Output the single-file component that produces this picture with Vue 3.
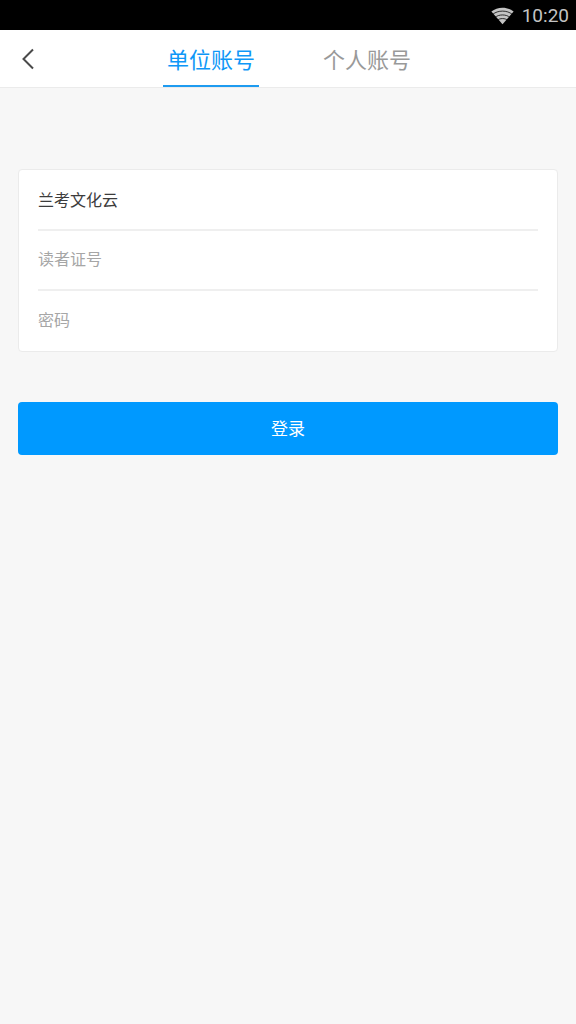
<script setup>
import { ref } from 'vue'

const tabs = ['单位账号', '个人账号']
const active = ref(0)
const unit = ref('兰考文化云')
const reader = ref('')
const password = ref('')
</script>

<template>
  <div class="screen">
    <div class="status">
      <svg class="wifi" viewBox="0 0 24 18" aria-hidden="true">
        <path class="fan" d="M12 17.6 0.4 4.4C3.6 1.7 7.6 0.3 12 0.3s8.4 1.4 11.6 4.1z" />
        <path class="gap" d="M1.8 7.3C4.6 5 8.1 3.9 12 3.9s7.4 1.1 10.2 3.4" />
        <path class="gap" d="M4 10.6C6.2 8.8 8.9 7.9 12 7.9s5.8 0.9 8 2.7" />
        <path class="gap" d="M6.4 13.5c1.6-1.2 3.4-1.8 5.6-1.8s4 0.6 5.6 1.8" />
      </svg>
      <span class="clock">10:20</span>
    </div>

    <header class="header">
      <button class="back" type="button" aria-label="返回">
        <svg viewBox="0 0 12 22" aria-hidden="true">
          <path d="M11 1.5 1.5 11 11 20.5" />
        </svg>
      </button>
      <nav class="tabs">
        <button
          v-for="(tab, i) in tabs"
          :key="tab"
          type="button"
          class="tab"
          :class="{ active: active === i }"
          @click="active = i"
        >{{ tab }}</button>
      </nav>
    </header>

    <form class="form" @submit.prevent>
      <div class="card">
        <div class="row">
          <input v-model="unit" type="text" aria-label="单位" />
        </div>
        <div class="row">
          <input v-model="reader" type="text" placeholder="读者证号" aria-label="读者证号" />
        </div>
        <div class="row">
          <input v-model="password" type="password" placeholder="密码" aria-label="密码" />
        </div>
      </div>
      <button class="submit" type="submit">登录</button>
    </form>
  </div>
</template>

<style>
body {
  margin: 0;
  background: #f7f7f7;
}
</style>

<style scoped>
.screen {
  min-height: 100vh;
  background: #f7f7f7;
  font-family: Roboto, "Noto Sans CJK SC", sans-serif;
}

.screen * {
  box-sizing: border-box;
}

button,
input {
  margin: 0;
  padding: 0;
  border: 0;
  background: none;
  font-family: inherit;
}

.status {
  display: flex;
  align-items: center;
  justify-content: flex-end;
  gap: 8px;
  height: 30px;
  padding: 2px 7px 0 0;
  background: #000;
}

.wifi {
  width: 23px;
  height: 18px;
}

.fan {
  fill: #c4c4c4;
}

.gap {
  fill: none;
  stroke: #000;
  stroke-width: 0.8;
}

.clock {
  color: #c4c4c4;
  font-size: 19px;
  line-height: 28px;
}

.header {
  display: grid;
  grid-template-columns: 56px 1fr 54px;
  height: 58px;
  border-bottom: 1px solid #ebebeb;
  background: #fff;
}

.back {
  display: flex;
  align-items: center;
  justify-content: center;
}

.back svg {
  width: 12px;
  height: 22px;
  fill: none;
  stroke: #4a4a4a;
  stroke-width: 2;
}

.tabs {
  display: flex;
  justify-content: center;
  gap: 60px;
}

.tab {
  padding: 6px 4px 0;
  border-bottom: 2px solid transparent;
  color: #999;
  font-size: 22px;
  line-height: 32px;
}

.tab.active {
  border-bottom-color: #1e9bf0;
  color: #0e97f7;
}

.form {
  padding: 81px 18px 0;
}

.card {
  padding: 1px 19px 0;
  border: 1px solid #ebebeb;
  border-radius: 4px;
  background: #fff;
}

.row {
  height: 60px;
  border-bottom: 2px solid #efefef;
}

.row:last-child {
  border-bottom: 0;
}

.row input {
  display: block;
  width: 100%;
  height: 100%;
  padding-bottom: 2px;
  color: #3c3c3c;
  font-size: 16px;
  outline: none;
}

.row input::placeholder {
  color: #a6a6a6;
  opacity: 1;
}

.submit {
  display: block;
  width: 100%;
  height: 53px;
  margin-top: 50px;
  padding-bottom: 2px;
  border-radius: 4px;
  background: #0099ff;
  color: #fff;
  font-size: 17px;
}
</style>
